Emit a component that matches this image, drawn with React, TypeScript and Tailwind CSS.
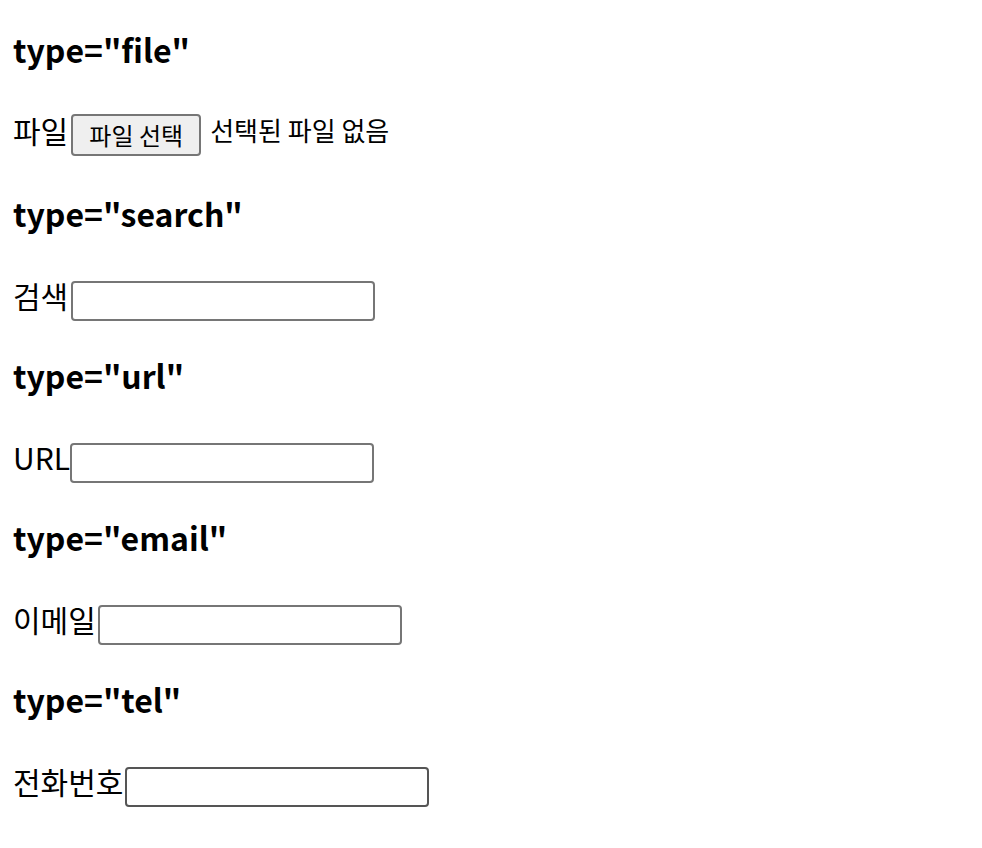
import React from "react";

const inputCls =
  "h-[40px] w-[304px] border-2 border-[#767676] rounded-[4px] bg-white px-[3px] text-[21px] outline-none";

function Section({
  title,
  children,
  rowCls,
}: {
  title: string;
  children: React.ReactNode;
  rowCls: string;
}) {
  return (
    <section>
      <h3 className="text-[32px] font-bold leading-[44px] text-black">{title}</h3>
      <div className={rowCls}>{children}</div>
    </section>
  );
}

export default function App() {
  return (
    <div className="min-h-[848px] bg-white pl-[13px] pt-[27px] text-black font-['Noto_Sans_CJK_KR','Noto_Sans',sans-serif]">
      <Section title={'type="file"'} rowCls="mt-[43px] mb-[35px] flex items-start">
        <span className="text-[30px] leading-[32px]">파일</span>
        <button className="ml-[3px] h-[42px] w-[130px] rounded-[4px] border-2 border-[#767676] bg-[#efefef] text-center text-[24px] leading-[38px]">
          파일 선택
        </button>
        <span className="ml-[9px] text-[26px] leading-[32px]">선택된 파일 없음</span>
      </Section>

      <Section title={'type="search"'} rowCls="mt-[46px] mb-[32px] flex items-start">
        <span className="text-[30px] leading-[28px]">검색</span>
        <input type="search" className={`ml-[3px] ${inputCls}`} />
      </Section>

      <Section title={'type="url"'} rowCls="mt-[46px] mb-[32px] flex items-start">
        <span className="text-[30px] leading-[28px]">URL</span>
        <input type="url" className={inputCls} />
      </Section>

      <Section title={'type="email"'} rowCls="mt-[46px] mb-[32px] flex items-start">
        <span className="text-[30px] leading-[28px]">이메일</span>
        <input type="email" className={`ml-[2px] ${inputCls}`} />
      </Section>

      <Section title={'type="tel"'} rowCls="mt-[46px] mb-[32px] flex items-start">
        <span className="text-[30px] leading-[28px]">전화번호</span>
        <input
          type="tel"
          className="ml-[2px] h-[40px] w-[304px] border-2 border-[#555555] rounded-[4px] bg-white px-[3px] text-[21px] outline-none"
        />
      </Section>
    </div>
  );
}
